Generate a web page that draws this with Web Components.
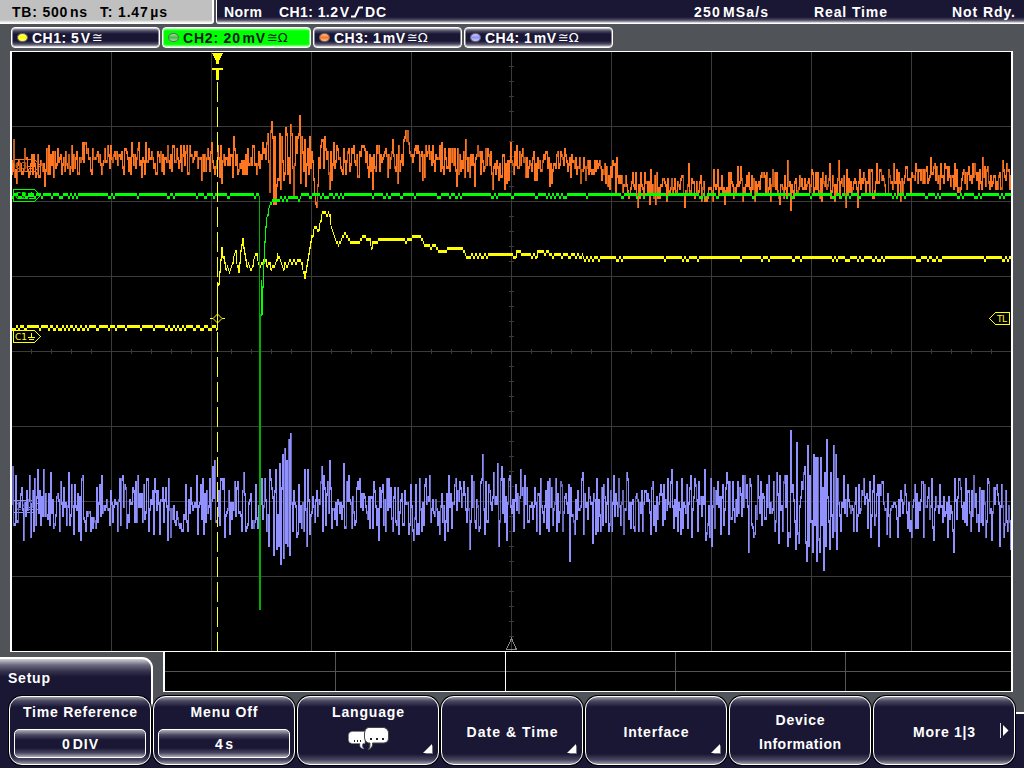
<!DOCTYPE html>
<html lang="en">
<head>
<meta charset="utf-8">
<title>Oscilloscope</title>
<style>
  body {
    margin: 0;
    width: 1024px;
    height: 768px;
    overflow: hidden;
    background: #505458;
    font: bold 14px/16px "Liberation Sans", Arial, sans-serif;
    color: #fff;
  }
</style>
</head>
<body>
<scope-screen></scope-screen>

<script>
// Narrow space between a number and its unit
const THIN = `<span style="word-spacing: -3px"> </span>`;

/**
 * A one line label that spreads its letters over a given width.
 */
class FitText extends HTMLElement {
  connectedCallback() {
    this.attachShadow({ mode: "open" });
    this.shadowRoot.innerHTML =
      `<style>:host { display: inline-block; white-space: nowrap; flex: none; text-align: left; }</style><slot></slot>`;
    const width = Number(this.getAttribute("width"));
    const natural = this.getBoundingClientRect().width;
    this.style.letterSpacing = `${(width - natural) / (this.textContent.length - 1)}px`;
    this.style.width = `${width}px`;
  }
}

/**
 * Top line: time base, trigger and acquisition state.
 */
class ScopeStatus extends HTMLElement {
  connectedCallback() {
    this.attachShadow({ mode: "open" });
    this.shadowRoot.innerHTML = `
      <style>
        :host { display: flex; height: 24px; gap: 2px; }
        .base, .state { display: flex; align-items: center; box-sizing: border-box; height: 24px; }
        .base {
          width: 214px;
          padding-left: 12px;
          gap: 13px;
          color: #000;
          border-right: 2px solid #fff;
          border-bottom-right-radius: 3px;
          background: linear-gradient(#c0c0c0 20px, #fff 23px);
        }
        .state {
          flex: 1;
          padding: 0 9px 0 7px;
          border-left: 1px solid #fff;
          border-bottom-left-radius: 3px;
          background: linear-gradient(#1a1735 17px, #4b485f 20px, #aaa8b4 22px, #fff 23px);
        }
        .trigger { display: flex; align-items: center; margin-left: 17px; gap: 2px; }
        .acq { display: flex; margin-left: auto; }
        .acq :nth-child(2) { margin-left: 46px; }
        .acq :nth-child(3) { margin-left: 65px; }
      </style>
      <div class="base">
        <fit-text width="75">TB: 500${THIN}ns</fit-text>
        <fit-text width="67">T: 1.47${THIN}µs</fit-text>
      </div>
      <div class="state">
        <fit-text width="38">Norm</fit-text>
        <div class="trigger">
          <fit-text width="70">CH1: 1.2${THIN}V</fit-text>
          <svg width="12" height="12"><path d="M0 10.500H4L8 1.500H12" fill="none" stroke="#fff" stroke-width="2"/></svg>
          <fit-text width="21">DC</fit-text>
        </div>
        <div class="acq">
          <fit-text width="74">250${THIN}MSa/s</fit-text>
          <fit-text width="73">Real Time</fit-text>
          <fit-text width="63">Not Rdy.</fit-text>
        </div>
      </div>
    `;
  }
}

/**
 * Channel badge with its colour lamp.
 */
class ScopeChannel extends HTMLElement {
  connectedCallback() {
    this.attachShadow({ mode: "open" });
    this.shadowRoot.innerHTML = `
      <style>
        :host {
          display: flex;
          align-items: center;
          box-sizing: border-box;
          width: 149px;
          height: 21px;
          padding: 0 0 0 5px;
          border: 1px solid #fff;
          border-radius: 4px;
          box-shadow: inset 0 0 0 1px rgba(255, 255, 255, .45);
          background: linear-gradient(#b8b7c0, #4d4a62 3px, #1a1735 6px, #1a1735 13px, #4d4a62 16px, #c8c8d0);
        }
        :host([selected]) {
          color: #0c1a20;
          background: linear-gradient(#b0ffb0, #00ff00 3px, #00ff00 16px, #a0ffa0);
        }
        .lamp {
          box-sizing: border-box;
          width: 11px;
          height: 9px;
          margin-right: 4px;
          border: 1px solid #666;
          border-radius: 50%;
          background: linear-gradient(#fff8, #fff0 50%, #fff8), var(--lamp);
        }
        .sign { margin-left: 2px; font: 13px/16px "DejaVu Sans", sans-serif; letter-spacing: -.2px; }
      </style>
      <span class="lamp"></span>
      <slot></slot>
      <span class="sign">${this.getAttribute("coupling")}</span>
    `;
  }
}

const SVG_COLORS = { c1: "#ffff00", c2: "#00ff00", c3: "#ff7520", c4: "#9090ff" };

// Small repeatable generator, so that the noise is the same on every load
function makeRandom(seed) {
  return () => {
    seed = (seed + 0x6d2b79f5) | 0;
    let t = Math.imul(seed ^ (seed >>> 15), 1 | seed);
    t = (t + Math.imul(t ^ (t >>> 7), 61 | t)) ^ t;
    return ((t ^ (t >>> 14)) >>> 0) / 4294967296;
  };
}

// Linear interpolation in a flat [x, y, x, y, ...] list
function lookup(points, x) {
  for (let i = 2; i < points.length; i += 2) {
    if (x <= points[i]) {
      const t = (x - points[i - 2]) / (points[i] - points[i - 2] || 1);
      return points[i - 1] + t * (points[i + 1] - points[i - 1]);
    }
  }
  return points[points.length - 1];
}

// The traces only use every third screen line, counted from the plot's top
const snap = (y) => Math.round((y - 52) / 3) * 3 + 52;

// Noise trace: one sample for each column, joined by vertical bars.
// Samples tend to swing from one side of the mean to the other.
function noiseTrace({ color, dim, mean, spread, peaks, seed }) {
  const random = makeRandom(seed);
  const samples = [];
  let side = 1;
  for (let x = 11; x < 1012; x++) {
    if (random() < 0.6) side = -side;
    const noise = Math.pow(random(), 1.4) * 1.75 * side;
    samples[x] = snap(lookup(mean, x) + noise * lookup(spread, x));
  }
  for (let i = 0; i < peaks.length; i += 2) {
    const below = peaks[i + 1] > lookup(mean, peaks[i]);
    samples[peaks[i]] = snap(peaks[i + 1] - (below ? 3 : 0));
  }
  let bright = "";
  let dark = "";
  for (let x = 12; x < 1011; x++) {
    const top = Math.min(samples[x], samples[x - 1]);
    const bar = `M${x} ${top}h1v${Math.abs(samples[x] - samples[x - 1]) + 3}h-1z`;
    if (random() < 0.2) dark += bar;
    else bright += bar;
  }
  return `<path fill="${dim}" d="${dark}"/><path fill="${color}" d="${bright}"/>`;
}

// Quiet trace: follows its curve and toggles between two levels,
// run(x) is the longest stay on the upper one
function quietTrace({ color, curve, seed, run }) {
  const random = makeRandom(seed);
  let d = "";
  let level = 0;
  let left = 0;
  let last = null;
  for (let x = 12; x < 1011; x++) {
    if (left-- <= 0) {
      level = level ? 0 : 3;
      left = level ? random() * random() * 4 : Math.pow(random(), 3) * run(x);
    }
    const value = curve(x);
    if (value === null) {
      last = null;
      continue;
    }
    const y = snap(value) + level;
    let top = y;
    let height = 3;
    if (last !== null && Math.abs(y - last) > 3) {
      top = Math.min(y, last);
      height = Math.abs(y - last) + 2;
    }
    d += `M${x} ${top}h1v${height}h-1z`;
    last = y;
  }
  return `<path fill="${color}" d="${d}"/>`;
}

const ORANGE = {
  color: SVG_COLORS.c3, dim: "#bf5b1c", seed: 31,
  mean: [11,160, 60,158, 200,157, 235,162, 262,156, 270,160, 310,162, 322,158, 350,158, 380,160, 400,158, 406,148, 412,158, 450,159, 500,163, 560,163, 600,170, 630,183, 700,187, 760,183, 830,184, 880,183, 920,176, 1011,176],
  spread: [11,9, 266,9, 271,27, 300,27, 308,10, 600,8, 640,8, 1011,8],
  peaks: [13,139, 16,183, 24,148, 44,186, 53,178, 61,174, 69,174, 78,174, 85,142, 101,174, 107,145, 138,142, 141,177, 155,175, 172,145, 180,145, 188,174, 201,180, 211,143, 214,175, 219,178, 221,183, 233,136, 237,174, 242,175, 253,145, 256,174, 267,133, 272,136, 273,204, 274,136, 275,204, 277,181, 281,136, 283,180, 285,127, 287,175, 289,183, 291,133, 293,195, 295,136, 296,151, 298,133, 300,183, 302,151, 305,186, 309,136, 311,150, 313,180, 314,195, 315,204, 316,207, 317,188, 319,170, 321,140, 322,139, 324,137, 326,160, 329,189, 331,181, 337,148, 345,174, 352,151, 358,177, 363,145, 372,189, 377,151, 384,150, 392,139, 395,172, 397,183, 399,172, 401,155, 403,140, 404,136, 405,130, 406,139, 407,130, 408,142, 409,154, 422,180, 424,177, 432,145, 443,174, 448,148, 456,186, 465,139, 467,171, 474,186, 477,145, 479,150, 492,189, 500,177, 504,189, 506,183, 510,142, 513,174, 516,145, 536,180, 546,151, 549,186, 551,184, 557,151, 562,157, 579,157, 587,160, 607,187, 612,160, 615,192, 616,157, 632,172, 637,208, 640,172, 644,172, 649,204, 655,204, 663,178, 666,201, 684,208, 688,163, 706,201, 713,169, 717,169, 724,204, 737,166, 740,166, 754,201, 763,172, 770,201, 779,204, 787,160, 790,210, 799,175, 811,169, 815,172, 821,201, 829,163, 838,160, 845,207, 857,207, 876,163, 880,169, 893,163, 900,201, 918,169, 930,157, 944,163, 945,166, 955,187, 974,163, 982,157, 991,187, 1002,160, 1008,169]
};

const BLUE = {
  color: SVG_COLORS.c4, dim: "#6868b8", seed: 77,
  mean: [11,503, 1011,504],
  spread: [11,16, 262,15, 272,24, 292,24, 300,16, 780,16, 790,22, 840,22, 850,15, 1011,16],
  peaks: [12,466, 15,475, 16,523, 21,487, 23,541, 29,475, 30,538, 37,469, 43,469, 49,526, 50,472, 53,529, 59,531, 60,481, 68,472, 71,484, 73,535, 80,541, 82,475, 85,532, 92,529, 95,529, 101,475, 109,525, 112,522, 121,478, 124,484, 137,475, 143,484, 148,531, 153,535, 159,535, 162,487, 167,541, 168,478, 170,538, 181,532, 186,522, 190,487, 196,475, 197,535, 200,484, 203,535, 212,466, 214,460, 215,522, 221,478, 224,538, 229,535, 237,481, 243,472, 252,523, 262,520, 264,478, 266,532, 268,547, 270,478, 273,556, 275,469, 276,550, 278,547, 279,463, 280,565, 282,454, 283,559, 284,448, 285,544, 286,460, 287,547, 288,439, 289,556, 290,433, 292,532, 303,532, 304,469, 306,547, 307,469, 309,535, 321,466, 323,475, 329,460, 331,529, 343,463, 345,529, 346,481, 357,481, 359,478, 369,529, 373,481, 378,541, 383,526, 390,487, 392,532, 397,487, 410,484, 413,541, 421,532, 425,478, 429,475, 439,535, 444,541, 448,475, 454,484, 463,481, 469,550, 471,475, 475,529, 482,454, 484,535, 485,481, 493,472, 497,463, 498,547, 501,466, 506,541, 508,478, 513,532, 520,469, 524,475, 527,523, 539,535, 548,532, 551,487, 568,484, 569,562, 570,487, 582,472, 583,535, 592,544, 596,478, 601,487, 607,478, 608,532, 618,478, 626,472, 633,529, 638,532, 651,487, 655,532, 660,484, 671,469, 673,528, 680,535, 681,478, 690,475, 691,538, 704,469, 705,541, 709,538, 710,478, 711,547, 726,472, 728,535, 729,481, 737,481, 748,553, 749,478, 753,538, 757,475, 760,481, 768,475, 774,532, 776,472, 778,544, 779,475, 783,481, 787,547, 789,538, 790,430, 792,484, 795,550, 796,442, 803,472, 804,467, 806,562, 807,445, 808,547, 809,475, 812,553, 813,454, 815,457, 816,562, 817,457, 819,553, 820,457, 822,487, 823,571, 824,472, 825,547, 826,439, 829,550, 830,472, 832,538, 833,445, 834,532, 835,454, 836,550, 837,478, 840,532, 843,475, 853,532, 863,478, 870,538, 873,475, 878,547, 879,484, 886,535, 889,538, 897,538, 904,484, 911,538, 921,481, 923,538, 924,484, 933,541, 947,538, 953,553, 954,478, 960,487, 970,532, 973,475, 978,532, 979,487, 985,538, 987,478, 991,541, 993,487, 996,484, 999,547, 1003,538, 1010,550]
};

const YELLOW_CURVE = [218,284, 219,270, 221,245, 222,252, 225,268, 228,265, 230,269, 233,254, 235,247, 236,262, 238,268, 240,250, 242,239, 244,254, 246,266, 249,262, 251,268, 254,255, 256,250, 258,262, 260,266, 264,255, 266,261, 270,264, 273,265, 277,254, 280,259, 283,264, 288,260, 301,260, 304,276, 307,260, 309,247, 311,236, 314,223, 318,229, 321,211, 328,211, 332,228, 335,238, 338,243, 342,232, 345,232, 350,240, 358,242, 363,235, 367,235, 371,243, 378,239, 388,238, 410,238, 413,235, 420,235, 424,243, 434,243, 439,250, 445,250, 449,246, 460,246, 465,252, 472,253, 480,252, 500,252, 505,254, 517,251, 525,252, 532,254, 537,251, 560,252, 578,252, 584,255, 1011,256];
const GREEN_CURVE = [261,310, 262,282, 263,262, 264,240, 265,226, 266,218, 268,209, 270,203, 273,199, 279,198, 281,195, 300,195, 302,193, 1011,193];

/**
 * Main graticule with the four traces and the markers.
 */
class ScopePlot extends HTMLElement {
  connectedCallback() {
    this.attachShadow({ mode: "open" });
    this.shadowRoot.innerHTML = `
      <style>
        :host {
          display: block;
          box-sizing: border-box;
          width: 1003px;
          height: 601px;
          border: solid #fff;
          border-width: 1px 2px;
          background: #000;
        }
        svg { display: block; }
        text { font: 9px "DejaVu Sans", sans-serif; }
      </style>
      <svg width="999" height="599" viewBox="12 52 999 599" shape-rendering="crispEdges">
        <path d="${this.grid()}" stroke="#3a3a3a" fill="none"/>
        <path d="M511.5 638.5L516.5 649.5H506.5Z" stroke="#888" fill="none"/>
        ${this.tag("C4", 500, SVG_COLORS.c4)}
        ${this.tag("C3", 159, SVG_COLORS.c3)}
        ${noiseTrace(BLUE)}
        ${noiseTrace(ORANGE)}
        ${quietTrace({
          color: SVG_COLORS.c1, seed: 5, run: (x) => (x < 217 ? 14 : x < 340 ? 8 : 45),
          curve: (x) => (x < 217 ? 325 : x < 218 ? null : lookup(YELLOW_CURVE, x))
        })}
        <path d="M217.5 285V330" stroke="${SVG_COLORS.c1}"/>
        ${quietTrace({
          color: SVG_COLORS.c2, seed: 19, run: () => 32,
          curve: (x) => (x < 259 ? 193 : x < 261 ? null : lookup(GREEN_CURVE, x))
        })}
        <path d="M259 196h1v118h1v296h-2z" fill="#00b000"/>
        <path d="M261.5 280V313" stroke="${SVG_COLORS.c2}"/>
        <path d="M217.5 82V651" stroke="#ffff20" stroke-dasharray="20 5"/>
        <path d="M212 53h11l-4 8v3h-3v-3zM212 68h11v2h-4v10h-3v-10h-4z" fill="#ffff00"/>
        <path d="M210 318.500h3l4.500 -4.500 4.500 4.500h3M213 318.500l4.500 4.500 4.500-4.500" stroke="#ffff00" fill="none" shape-rendering="auto"/>
        ${this.tag("C2", 189, SVG_COLORS.c2)}
        ${this.tag("C1", 330, SVG_COLORS.c1)}
        <path d="M1009.5 312.5v12h-14l-6-6 6-6z" stroke="#ffff00" fill="#000"/>
        <text x="997" y="322" fill="#ffff00" textLength="10">TL</text>
      </svg>
    `;
  }

  grid() {
    let d = "";
    for (let x = 111; x < 1011; x += 100) d += `M${x}.5 52V651`;
    for (let y = 126; y < 651; y += 75) d += `M12 ${y}.5H1011`;
    // Minor ticks on the two axes
    for (let x = 31; x < 1011; x += 20) d += `M${x}.5 349v5`;
    for (let y = 66; y < 651; y += 15) d += `M509 ${y}.5h5`;
    return d;
  }

  tag(name, y, color) {
    return `
      <path d="M13.500 ${y + 0.5}h21l6 6-6 6h-21z" stroke="${color}" fill="none"/>
      <text x="15" y="${y + 10}" fill="${color}" textLength="12">${name}</text>
      <path d="M31.5 ${y + 3}v5M28 ${y + 7.5}h7M29 ${y + 9.5}h5" stroke="${color}"/>
    `;
  }
}

/**
 * Empty overview strip under the graticule.
 */
class ScopeOverview extends HTMLElement {
  connectedCallback() {
    this.attachShadow({ mode: "open" });
    this.shadowRoot.innerHTML = `
      <style>
        :host {
          display: block;
          box-sizing: border-box;
          width: 850px;
          height: 40px;
          border: solid #fff;
          border-width: 0 2px 1px;
          background: #000;
        }
        svg { display: block; }
      </style>
      <svg width="846" height="39" viewBox="165 652 846 39" shape-rendering="crispEdges">
        <path d="M165 671.5H1011M335.5 652v39M675.5 652v39M845.5 652v39" stroke="#555"/>
        <path d="M505.5 652v39" stroke="#fff"/>
      </svg>
    `;
  }
}

/**
 * Soft key. The label goes in the default slot, an optional
 * setting (number and unit) is shown in a box below it.
 */
class ScopeKey extends HTMLElement {
  connectedCallback() {
    this.attachShadow({ mode: "open" });
    const value = (this.getAttribute("value") || "").replace(" ", THIN);
    this.shadowRoot.innerHTML = `
      <style>
        :host {
          position: relative;
          display: flex;
          flex-direction: column;
          align-items: center;
          justify-content: center;
          gap: 8px;
          box-sizing: border-box;
          width: 142px;
          height: 69px;
          padding-top: 2px;
          border: 1px solid #fff;
          border-radius: 13px;
          box-shadow: 0 0 0 1px #000;
          background: linear-gradient(#9a99a6, #4a4861 4px, #1a1735 10px, #1a1735 57px, #4a4861 63px, #9a99a6);
        }
        :host([top]) { justify-content: flex-start; padding-top: 7px; }
        .value {
          display: flex;
          align-items: center;
          justify-content: center;
          box-sizing: border-box;
          width: 132px;
          height: 29px;
          margin-top: 1px;
          border: 1px solid #fff;
          border-radius: 5px;
          background: linear-gradient(#b0afba, #4a4861 5px, #1a1735 10px, #1a1735 18px, #4a4861 23px, #b0afba);
        }
        .mark { position: absolute; right: 4px; bottom: 10px; }
        .next { position: absolute; right: 4px; top: 26px; }
      </style>
      <slot></slot>
      ${value ? `<div class="value"><fit-text width="${this.getAttribute("fit")}">${value}</fit-text></div>` : ""}
      ${this.hasAttribute("submenu") ? `<svg class="mark" width="11" height="10"><path d="M2 10L10 1V10Z" fill="#777"/><path d="M0 9L9 0V9Z" fill="#fff"/></svg>` : ""}
      ${this.hasAttribute("more") ? `<svg class="next" width="11" height="16"><path d="M1.500 0V15" stroke="#ddd"/><path d="M4 2L9.500 7.500L4 13Z" fill="#fff"/></svg>` : ""}
    `;
  }
}

/**
 * Two speech bubbles.
 */
class SpeechIcon extends HTMLElement {
  connectedCallback() {
    this.attachShadow({ mode: "open" });
    this.shadowRoot.innerHTML = `
      <style>
        :host { display: block; width: 41px; height: 24px; margin-top: -1px; }
        svg { display: block; }
      </style>
      <svg width="42" height="24">
        <path d="M4 4.500H17V16.500H15Q13 19 16 22Q11 21 12 16.500H4Q0.500 16 0.500 13V8Q0.500 5 4 4.500Z" fill="#fff" stroke="#777" stroke-width=".5"/>
        <path d="M20 .5H36Q40.500 2 40.500 6V11Q40.500 15.500 36 16H24.500Q25.500 20 20 23Q22.500 20 22 16H20Q16.500 14 16.500 11V6Q16.500 2 20 .5Z" fill="#fff" stroke="#444"/>
        <path d="M6 13h1v2h-1zM9 13h1v2h-1zM12 13h1v2h-1zM22 11h2v2h-2zM28 11h2v2h-2zM34 11h2v2h-2z" fill="#222"/>
      </svg>
    `;
  }
}

/**
 * Lower part: menu tab, overview strip and the row of soft keys.
 */
class ScopeMenu extends HTMLElement {
  connectedCallback() {
    this.attachShadow({ mode: "open" });
    this.shadowRoot.innerHTML = `
      <style>
        :host {
          display: block;
          height: 116px;
          background: linear-gradient(#0000 60px, #fff 60px, #fff 62px, #1a1735 62px);
        }
        .upper { display: flex; justify-content: space-between; width: 1013px; height: 44px; }
        .tab {
          box-sizing: border-box;
          width: 153px;
          height: 60px;
          margin-top: 5px;
          padding: 11px 0 0 8px;
          border: solid #fff;
          border-width: 2px 2px 0 0;
          border-top-right-radius: 11px;
          background: linear-gradient(#d0d0d6, #6c6a7e 6px, #37344f 12px, #1a1735 18px);
        }
        .keys { position: relative; display: flex; gap: 2px; padding-left: 9px; }
      </style>
      <div class="upper">
        <div class="tab"><fit-text width="42">Setup</fit-text></div>
        <scope-overview></scope-overview>
      </div>
      <div class="keys">
        <scope-key top value="0 DIV" fit="36"><fit-text width="114">Time Reference</fit-text></scope-key>
        <scope-key top value="4 s" fit="18"><fit-text width="67">Menu Off</fit-text></scope-key>
        <scope-key top submenu><fit-text width="72">Language</fit-text><speech-icon></speech-icon></scope-key>
        <scope-key submenu><fit-text width="91">Date &amp; Time</fit-text></scope-key>
        <scope-key submenu><fit-text width="65">Interface</fit-text></scope-key>
        <scope-key><fit-text width="49">Device</fit-text><fit-text width="82">Information</fit-text></scope-key>
        <scope-key more><fit-text width="62">More 1|3</fit-text></scope-key>
      </div>
    `;
  }
}

/**
 * The whole instrument screen.
 */
class ScopeScreen extends HTMLElement {
  connectedCallback() {
    this.attachShadow({ mode: "open" });
    this.shadowRoot.innerHTML = `
      <style>
        :host { display: block; width: 1024px; height: 768px; }
        .channels { display: flex; gap: 2px; padding: 3px 0 3px 11px; }
        scope-plot { margin-left: 10px; }
      </style>
      <scope-status></scope-status>
      <div class="channels">
        <scope-channel coupling="≅" style="--lamp: #ffff00"><fit-text width="58">CH1: 5${THIN}V</fit-text></scope-channel>
        <scope-channel selected coupling="≅Ω" style="--lamp: #40c040"><fit-text width="82">CH2: 20${THIN}mV</fit-text></scope-channel>
        <scope-channel coupling="≅Ω" style="--lamp: #ff7520"><fit-text width="71">CH3: 1${THIN}mV</fit-text></scope-channel>
        <scope-channel coupling="≅Ω" style="--lamp: #9090ff"><fit-text width="71">CH4: 1${THIN}mV</fit-text></scope-channel>
      </div>
      <scope-plot></scope-plot>
      <scope-menu></scope-menu>
    `;
  }
}

customElements.define("fit-text", FitText);
customElements.define("scope-status", ScopeStatus);
customElements.define("scope-channel", ScopeChannel);
customElements.define("scope-plot", ScopePlot);
customElements.define("scope-overview", ScopeOverview);
customElements.define("speech-icon", SpeechIcon);
customElements.define("scope-key", ScopeKey);
customElements.define("scope-menu", ScopeMenu);
customElements.define("scope-screen", ScopeScreen);
</script>
</body>
</html>
